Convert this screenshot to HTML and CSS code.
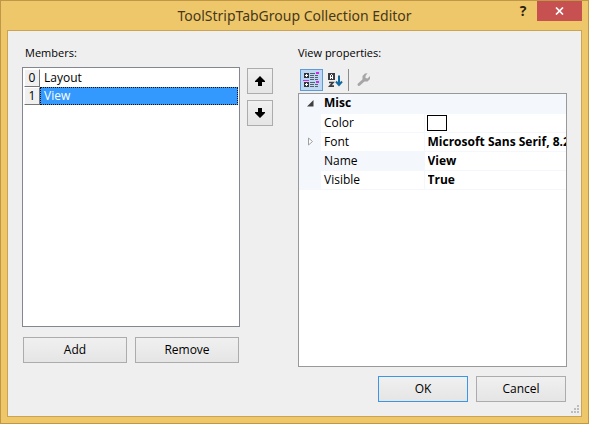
FILE: index.html
```html
<!DOCTYPE html>
<html lang="en">
<head>
<meta charset="utf-8">
<title>ToolStripTabGroup Collection Editor</title>
<link rel="stylesheet" href="styles.css">
</head>
<body>
<div class="window" role="dialog" aria-labelledby="title">
  <header class="titlebar">
    <h1 class="title" id="title">ToolStripTabGroup Collection Editor</h1>
    <div class="caption-buttons">
      <button class="help" type="button" aria-label="Help">?</button>
      <button class="close" type="button" aria-label="Close">
        <svg width="9" height="8" viewBox="0 0 9 8"><path d="M1 .5 8 7.500M8 .5 1 7.500" stroke="#fff" stroke-width="1.700" fill="none"/></svg>
      </button>
    </div>
  </header>
  <main class="client">
    <div class="editor">
      <section class="members">
        <h2 class="label" id="members-label">Members:</h2>
        <ul class="list" role="listbox" aria-labelledby="members-label">
          <li class="item" role="option" aria-selected="false"><span class="index">0</span><span class="name">Layout</span></li>
          <li class="item selected" role="option" aria-selected="true"><span class="index">1</span><span class="name">View</span></li>
        </ul>
        <div class="member-actions">
          <button class="button" type="button">Add</button>
          <button class="button" type="button">Remove</button>
        </div>
      </section>
      <div class="order">
        <button class="button square" type="button" aria-label="Move up">
          <svg width="10" height="10" viewBox="0 0 10 10"><path d="M5 0 10 5V6H7V10H3V6H0V5Z"/></svg>
        </button>
        <button class="button square" type="button" aria-label="Move down">
          <svg width="10" height="10" viewBox="0 0 10 10"><path d="M5 10 10 5V4H7V0H3V4H0V5Z"/></svg>
        </button>
      </div>
      <section class="properties">
        <h2 class="label">View properties:</h2>
        <div class="toolbar" role="toolbar" aria-label="Property view">
          <button class="tool pressed" type="button" aria-label="Categorized" aria-pressed="true">
            <svg width="17" height="16" viewBox="0 0 17 16" shape-rendering="crispEdges">
              <path fill="#35363c" d="M1 1h5v5H1zM1 10h5v5H1z"/>
              <path fill="#fff" d="M3 2h1v1h1v1H4v1H3V4H2V3h1zM3 11h1v1h1v1H4v1H3v-1H2v-1h1z"/>
              <path fill="#55606c" d="M7 1h5v1H7zM7 3h4v1H7zM7 5h4v1H7zM7 7h4v1H7zM7 10h5v1H7zM7 12h4v1H7zM7 14h4v1H7zM12 3h3v1h-3zM12 5h3v1h-3zM12 7h3v1h-3zM12 12h3v1h-3zM12 14h3v1h-3z"/>
              <path fill="#d42be0" d="M0 8h6v1H0zM13 0h3v2h-3zM13 9h3v2h-3z"/>
            </svg>
          </button>
          <button class="tool" type="button" aria-label="Alphabetical">
            <svg width="16" height="16" viewBox="0 0 16 16">
              <path fill="#3c3c42" d="M1 1h7v7H1z"/>
              <path fill="#fff" shape-rendering="crispEdges" d="M4 2h1v1H4zM3 3h1v4H3zM5 3h1v4H5zM4 5h1v1H4z"/>
              <path fill="none" stroke="#3c3c42" stroke-width="1.700" d="M2 10.500H6L2.800 14.200H7"/>
              <path fill="none" stroke="#146a9f" stroke-width="2" d="M12 3.500v9M9 9.500l3 3.500 3-3.500"/>
            </svg>
          </button>
          <span class="separator"></span>
          <button class="tool" type="button" aria-label="Property pages" disabled>
            <svg width="16" height="16" viewBox="0 0 16 16">
              <path fill="none" stroke="#a6a6a6" stroke-width="3" stroke-linecap="round" d="M3 12.500 8.500 7.500"/>
              <path fill="#a6a6a6" d="M11.500 1.200 9 1.500 6.500 4V7.500L8.500 9.500H11.500L14 7V4L11.500 6.500 9.500 6V4z"/>
            </svg>
          </button>
        </div>
        <div class="grid-box">
          <table class="grid">
            <colgroup><col class="gutter"><col class="names"><col></colgroup>
            <tbody>
              <tr class="category">
                <td><button class="expander" type="button" aria-label="Collapse Misc"><svg width="7" height="7" viewBox="0 0 7 7"><path d="M6.500 0V6.500H0Z" fill="#404040"/></svg></button></td>
                <th colspan="2" scope="rowgroup">Misc</th>
              </tr>
              <tr>
                <td></td>
                <th scope="row"><label for="color">Color</label></th>
                <td class="value"><button class="swatch" id="color" type="button"></button></td>
              </tr>
              <tr>
                <td><button class="expander" type="button" aria-label="Expand Font"><svg width="5" height="9" viewBox="0 0 5 9"><path d="M.5 1 4.500 4.500.5 8Z" fill="#fff" stroke="#a0a0a0"/></svg></button></td>
                <th scope="row"><label for="font">Font</label></th>
                <td class="value"><input id="font" type="text" value="Microsoft Sans Serif, 8.25pt"></td>
              </tr>
              <tr class="current">
                <td></td>
                <th scope="row"><label for="name">Name</label></th>
                <td class="value"><input id="name" type="text" value="View"></td>
              </tr>
              <tr>
                <td></td>
                <th scope="row"><label for="visible">Visible</label></th>
                <td class="value"><input id="visible" type="text" value="True"></td>
              </tr>
            </tbody>
          </table>
        </div>
      </section>
    </div>
    <footer class="dialog-actions">
      <button class="button default" type="button">OK</button>
      <button class="button" type="button">Cancel</button>
    </footer>
    <svg class="grip" width="8" height="8" viewBox="0 0 8 8"><path fill="#bdbdbd" d="M6 0h2v2H6zM3 3h2v2H3zM6 3h2v2H6zM0 6h2v2H0zM3 6h2v2H3zM6 6h2v2H6z"/></svg>
  </main>
</div>
</body>
</html>
```
FILE: styles.css
```css
* { box-sizing: border-box; }

body {
  margin: 0;
  font: 12px/16px "Open Sans", "Noto Sans", sans-serif;
  color: #000;
}

button, input { font: inherit; color: inherit; }
button { padding: 0; border: 0; background: none; }
svg { display: block; }
h1, h2 { margin: 0; font-weight: 400; }

.window {
  display: flex;
  flex-direction: column;
  min-height: 100vh;
  padding: 0 6px 6px;
  border: 1px solid #bf9747;
  background: #efc76b;
}

.titlebar {
  position: relative;
  display: flex;
  justify-content: center;
  height: 29px;
}

.title {
  font: 14px/29px "Noto Sans", "Open Sans", sans-serif;
  color: #46381c;
}

.caption-buttons {
  position: absolute;
  top: 0;
  right: 0;
  display: flex;
}

.help {
  width: 28px;
  height: 20px;
  font-size: 14px;
  font-weight: 700;
  line-height: 20px;
  color: #2c2312;
}

.close {
  display: grid;
  place-items: center;
  width: 45px;
  height: 20px;
  background: #c75050;
}

.client {
  position: relative;
  display: flex;
  flex: 1;
  flex-direction: column;
  padding: 14px 14px;
  border: 1px solid #cba353;
  background: #efefef;
}

.editor {
  display: grid;
  flex: 1;
  grid-template-columns: minmax(0, 218fr) 26px minmax(0, 287fr);
  column-gap: 7px;
}

.members, .properties {
  display: flex;
  flex-direction: column;
}

.properties { margin-left: 18px; }

.label {
  font-size: 11px;
  line-height: 16px;
}

.members .label { padding-left: 3px; }

.list {
  flex: 1;
  margin: 6px 0 0;
  padding: 1px;
  list-style: none;
  border: 1px solid #828790;
  background: #fff;
}

.item {
  display: flex;
  height: 18px;
  line-height: 18px;
}

.index {
  width: 16px;
  text-align: center;
  border: 1px solid;
  border-color: #fff #777 #777 #fff;
  background: #f0f0f0;
  line-height: 16px;
}

.name {
  flex: 1;
  padding-left: 3px;
  border: 1px solid transparent;
  line-height: 16px;
}

.selected .name {
  border: 1px dotted #111;
  background: #3399ff;
  color: #fff;
}

.button {
  height: 26px;
  border: 1px solid #acacac;
  background: linear-gradient(#f0f0f0, #e5e5e5);
}

.member-actions {
  display: grid;
  grid-template-columns: 1fr 1fr;
  gap: 8px;
  margin: 10px 1px 4px;
}

.order {
  display: flex;
  flex-direction: column;
  gap: 6px;
  padding-top: 23px;
}

.square {
  display: grid;
  place-items: center;
}

.toolbar {
  display: flex;
  align-items: center;
  height: 26px;
  margin-top: 6px;
  padding-left: 2px;
}

.tool {
  display: grid;
  place-items: center;
  width: 23px;
  height: 22px;
}

.pressed {
  border: 1px solid #5e9ad6;
  background: #bcd8f5;
}

.separator {
  width: 1px;
  height: 22px;
  margin: 0 3px 0 2px;
  background: #8c8c8c;
}

.grid-box {
  flex: 1;
  border: 1px solid #999;
  background: #fff;
}

.grid {
  width: 100%;
  table-layout: fixed;
  border-collapse: collapse;
}

.gutter { width: 22px; }
.names { width: 103px; }

.grid td, .grid th {
  height: 19px;
  padding: 0;
  font-weight: 400;
  line-height: 18px;
  text-align: left;
  border-bottom: 1px solid #f4f7fc;
}

.grid th { padding-left: 3px; }
.grid td:first-child, .category th, .current th { background: #f4f7fc; }
.grid .category th { font-weight: 700; }
.grid .value { padding-left: 2px; border-left: 1px solid #f4f7fc; }

.expander {
  display: grid;
  place-items: center;
  width: 22px;
  height: 18px;
}

.value input {
  display: block;
  width: 100%;
  height: 18px;
  padding: 0 0 0 1px;
  border: 0;
  background: none;
  font-weight: 700;
}

.swatch {
  display: block;
  width: 20px;
  height: 16px;
  border: 1px solid #000;
  background: #fff;
}

.dialog-actions {
  display: flex;
  justify-content: flex-end;
  gap: 8px;
  margin-top: 9px;
  padding-right: 1px;
}

.dialog-actions .button { width: 90px; }
.dialog-actions .default { border-color: #3c96e6; }

.grip {
  position: absolute;
  right: 2px;
  bottom: 3px;
}
```
